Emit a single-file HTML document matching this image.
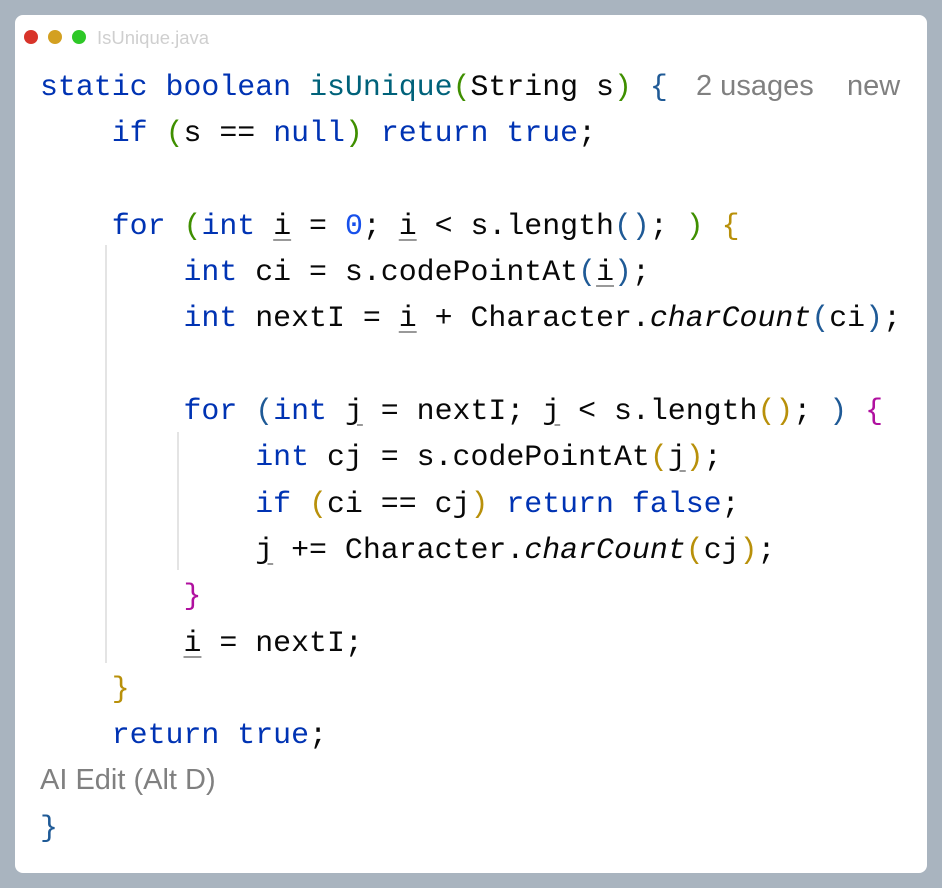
<!DOCTYPE html>
<html><head><style>
body{margin:0;width:942px;height:888px;background:#a9b4bf;position:relative;overflow:hidden}
.card{position:absolute;left:15px;top:15px;width:912px;height:858px;background:#fff;border-radius:8px}
.dot{position:absolute;top:30px;width:14px;height:14px;border-radius:50%}
.title{position:absolute;left:97px;top:27px;font:18.5px "Liberation Sans",sans-serif;color:#cfcfcf}
pre{position:absolute;left:40px;top:64px;margin:0;font:29.9px/46.3px "Liberation Mono",monospace;color:#080808}
.k{color:#0033b3}.m{color:#00627a}.g{color:#3f8f00}.y{color:#b8900a}.p{color:#b0109f}.b{color:#1f5a96}.n{color:#1750eb}
.u{text-decoration:underline;text-decoration-color:#999;text-underline-offset:5px}
.h{position:absolute;font:29px "Liberation Sans",sans-serif;color:#808080}
.it{font-style:italic}
.guide{position:absolute;width:2px;background:#e4e4e4}
</style></head><body>
<div class="card"></div>
<div class="dot" style="left:24px;background:#d8342a"></div>
<div class="dot" style="left:48px;background:#d3a021"></div>
<div class="dot" style="left:72px;background:#2ec827"></div>
<div class="title">IsUnique.java</div>
<div class="guide" style="left:105px;top:245px;height:418px"></div>
<div class="guide" style="left:177px;top:432px;height:138px"></div>
<div class="h" style="left:696px;top:70px">2 usages</div>
<div class="h" style="left:847px;top:70px">new</div>
<div class="h" style="left:40px;top:764px;font-size:29px">AI Edit (Alt D)</div>
<pre><span class="k">static boolean</span> <span class="m">isUnique</span><span class="g">(</span>String s<span class="g">)</span> <span class="b">{</span>
    <span class="k">if</span> <span class="g">(</span>s == <span class="k">null</span><span class="g">)</span> <span class="k">return true</span>;

    <span class="k">for</span> <span class="g">(</span><span class="k">int</span> <span class="u">i</span> = <span class="n">0</span>; <span class="u">i</span> &lt; s.length<span class="b">()</span>; <span class="g">)</span> <span class="y">{</span>
        <span class="k">int</span> ci = s.codePointAt<span class="b">(</span><span class="u">i</span><span class="b">)</span>;
        <span class="k">int</span> nextI = <span class="u">i</span> + Character.<span class="it">charCount</span><span class="b">(</span>ci<span class="b">)</span>;

        <span class="k">for</span> <span class="b">(</span><span class="k">int</span> <span class="u">j</span> = nextI; <span class="u">j</span> &lt; s.length<span class="y">()</span>; <span class="b">)</span> <span class="p">{</span>
            <span class="k">int</span> cj = s.codePointAt<span class="y">(</span><span class="u">j</span><span class="y">)</span>;
            <span class="k">if</span> <span class="y">(</span>ci == cj<span class="y">)</span> <span class="k">return false</span>;
            <span class="u">j</span> += Character.<span class="it">charCount</span><span class="y">(</span>cj<span class="y">)</span>;
        <span class="p">}</span>
        <span class="u">i</span> = nextI;
    <span class="y">}</span>
    <span class="k">return true</span>;

<span class="b">}</span></pre>
</body></html>
